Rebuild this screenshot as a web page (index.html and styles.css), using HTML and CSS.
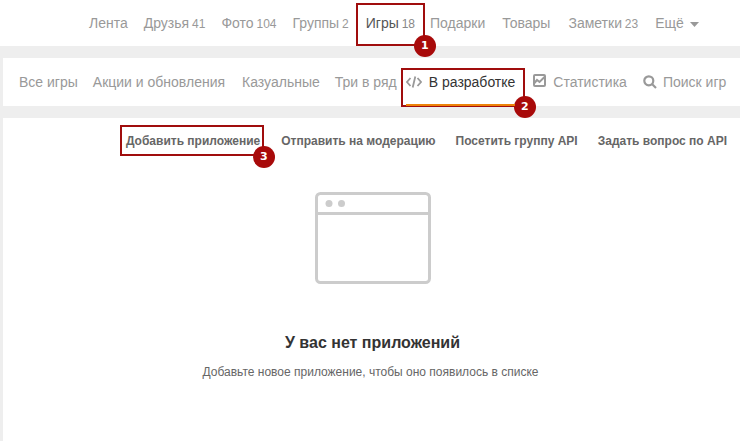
FILE: index.html
```html
<!DOCTYPE html>
<html lang="ru">
<head>
<meta charset="utf-8">
<title>Игры</title>
<link rel="stylesheet" href="styles.css">
</head>
<body>
<nav class="topnav">
  <a class="top-item">Лента</a>
  <a class="top-item">Друзья <small>41</small></a>
  <a class="top-item">Фото <small>104</small></a>
  <a class="top-item">Группы <small>2</small></a>
  <a class="top-item top-active">Игры <small>18</small><i class="mark mark-games"></i><b class="badge badge-games">1</b></a>
  <a class="top-item top-gifts">Подарки</a>
  <a class="top-item top-goods">Товары</a>
  <a class="top-item top-notes">Заметки <small>23</small></a>
  <a class="top-item top-more">Ещё <svg class="caret" width="9" height="5" viewBox="0 0 9 5"><path d="M0 0h9L4.500 5z"/></svg></a>
</nav>
<nav class="subnav">
  <a class="sub-item">Все игры</a>
  <a class="sub-item sub-tight">Акции и обновления</a>
  <a class="sub-item sub-wide">Казуальные</a>
  <a class="sub-item sub-tight">Три в ряд</a>
  <a class="sub-item sub-active"><svg class="ico ico-code" width="16" height="12" viewBox="0 0 16 12"><path d="M4.500 2 1 6l3.500 4M11.500 2 15 6l-3.500 4M9.300 .5 6.700 11.500"/></svg>В разработке<i class="mark mark-dev"></i><b class="badge badge-dev">2</b></a>
  <a class="sub-item sub-stat"><svg class="ico ico-stat" width="13" height="13" viewBox="0 0 13 13"><rect x="1" y="1" width="11" height="11" rx="1"/><path d="m1 9.500 3-3.500 2.500 2L11.500 3"/></svg>Статистика</a>
  <a class="sub-item"><svg class="ico ico-search" width="14" height="14" viewBox="0 0 14 14"><circle cx="5.800" cy="5.800" r="4.500"/><path d="m9 9 4 4"/></svg>Поиск игр</a>
</nav>
<main class="content">
  <div class="actions">
    <a class="action action-add">Добавить приложение<i class="mark mark-add"></i><b class="badge badge-add">3</b></a>
    <a class="action">Отправить на модерацию</a>
    <a class="action">Посетить группу API</a>
    <a class="action">Задать вопрос по API</a>
  </div>
  <div class="empty">
    <svg class="window" width="116" height="92" viewBox="0 0 116 92">
      <rect class="win-frame" x="1.500" y="1.500" width="113" height="89" rx="4"/>
      <path class="win-frame" d="M1.500 21.500h113"/>
      <circle class="win-dot" cx="14" cy="11.500" r="3.500"/>
      <circle class="win-dot" cx="26.500" cy="11.500" r="3.500"/>
    </svg>
    <h1 class="empty-title">У вас нет приложений</h1>
    <p class="empty-text">Добавьте новое приложение, чтобы оно появилось в списке</p>
  </div>
</main>
</body>
</html>
```
FILE: styles.css
```css
* { box-sizing: border-box; }
html, body { margin: 0; padding: 0; }
body {
  width: 740px;
  height: 441px;
  overflow: hidden;
  background: #eeeeee;
  font-family: "Liberation Sans", Arial, sans-serif;
  color: #999;
}
.topnav {
  display: flex;
  gap: 16px;
  height: 46px;
  padding-left: 89px;
  background: #fff;
  font-size: 14px;
  line-height: 46px;
  white-space: nowrap;
}
.top-item { position: relative; display: block; }
.top-item small { margin-left: -1px; font-size: 12px; }
.top-active { margin-left: 1px; color: #555; }
.top-active small { color: #888; }
.top-gifts { margin-left: -1px; }
.top-goods { margin-left: 1px; }
.top-notes { margin-left: 2px; }
.top-more { margin-left: 1px; }
.caret { margin-left: 2px; vertical-align: 1px; fill: #999; }
.subnav {
  display: flex;
  gap: 16px;
  height: 48px;
  margin: 12px 0 12px 3px;
  padding-left: 16px;
  background: #fff;
  font-size: 14px;
  line-height: 48px;
  white-space: nowrap;
}
.sub-item { position: relative; display: block; }
.sub-tight { margin-left: -1px; }
.sub-wide { margin-left: 1px; }
.sub-active { margin-left: -7px; color: #333; }
.sub-stat { margin-left: 2px; }
.sub-active::after {
  content: "";
  position: absolute;
  left: 0;
  right: 0;
  bottom: 0;
  height: 2px;
  background: #ee8208;
}
.ico { fill: none; stroke: #999; margin-right: 7px; }
.ico-code { stroke-width: 1.800; vertical-align: -1px; }
.ico-stat { stroke-width: 2; vertical-align: 0; }
.ico-search { stroke-width: 2.200; vertical-align: -2px; margin-right: 6px; }
.content {
  height: 323px;
  margin-left: 3px;
  background: #fff;
}
.actions {
  display: flex;
  justify-content: flex-end;
  gap: 20px;
  padding: 15px 13px 0 0;
  font-size: 12px;
  font-weight: 700;
  line-height: 16px;
  color: #666;
  white-space: nowrap;
}
.action { position: relative; display: block; }
.action-add { margin-right: 1px; }
.empty {
  display: flex;
  flex-direction: column;
  align-items: center;
  padding-top: 43px;
}
.window { display: block; margin-left: 2px; }
.win-frame { fill: none; stroke: #ccc; stroke-width: 3; }
.win-dot { fill: #ccc; }
.empty-title {
  margin: 49px 0 0 2px;
  font-size: 16px;
  line-height: 20px;
  font-weight: 700;
  color: #333;
}
.empty-text {
  margin: 11px 0 0 -2px;
  font-size: 12px;
  line-height: 16px;
  color: #666;
}
.mark {
  position: absolute;
  border: 2px solid #a00d0d;
  pointer-events: none;
}
.mark-games { left: -10px; top: 3px; width: 69px; height: 43px; }
.mark-dev { left: -5px; top: 10px; width: 124px; height: 39px; }
.mark-add { left: -6px; top: -8px; width: 144px; height: 31px; }
.badge {
  position: absolute;
  width: 22px;
  height: 22px;
  border-radius: 50%;
  background: #a80a0a;
  color: #fff;
  font-family: "DejaVu Sans", sans-serif;
  font-size: 11px;
  font-weight: 700;
  line-height: 22px;
  text-align: center;
}
.badge-games { left: 48px; top: 35px; }
.badge-dev { left: 108px; top: 38px; }
.badge-add { left: 127px; top: 13px; }
```
